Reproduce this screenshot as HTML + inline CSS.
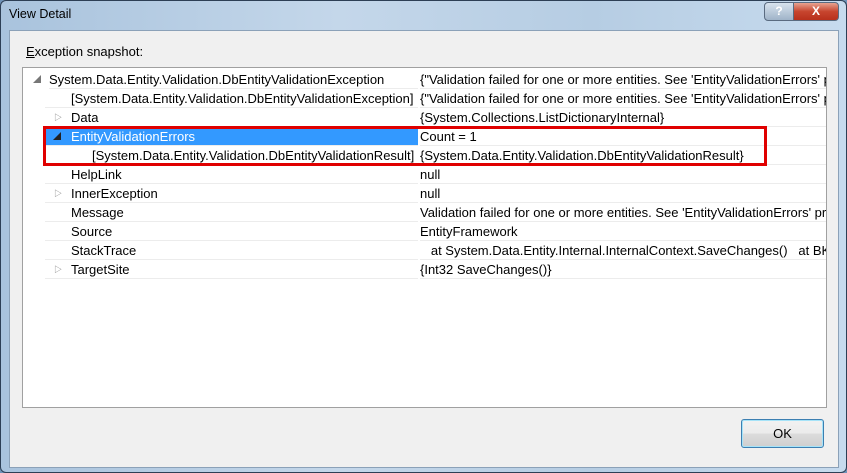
<!DOCTYPE html>
<html><head><style>
body{margin:0;width:847px;height:473px;overflow:hidden;background:#6f93b8;font-family:"Liberation Sans","Noto Sans CJK SC",sans-serif;}
#win{position:absolute;left:0;top:0;width:845px;height:471px;border:1px solid #2d3f55;border-radius:6px;background:linear-gradient(90deg,#a9c3dd,#c4d7ea 40%,#b6cde3 70%,#c7dbee);}
#title{position:absolute;left:8px;top:6px;font-size:12.5px;color:#000;}
#client{position:absolute;left:8px;top:29px;width:828px;height:436px;background:#f0f0f0;border:1px solid #8ba1b8;}
.cap{position:absolute;top:1px;height:17px;border:1px solid #5a6b80;font-size:12px;color:#fff;text-align:center;line-height:17px;font-weight:bold}
#lbl{position:absolute;left:25px;top:43px;font-size:13px;}
#tree{position:absolute;left:21px;top:66px;width:803px;height:339px;background:#fff;border:1px solid #a0a0a0;overflow:hidden;}
.row{position:absolute;left:0;width:803px;height:19px;font-size:13px;line-height:19px;white-space:nowrap;}
.n{position:absolute;left:22px;width:373px;height:18px;border-bottom:1px solid #ececec;}
.v{position:absolute;left:397px;width:410px;height:18px;border-bottom:1px solid #ececec;overflow:hidden;}
.ic{position:absolute;font-size:8px;color:#777;top:0}
#red{position:absolute;left:42px;top:125px;width:718px;height:34px;border:3px solid #e00000;}
#ok{position:absolute;left:740px;top:418px;width:81px;height:27px;border:1px solid #3c7fb1;border-radius:3px;background:linear-gradient(#f2f2f2,#ebebeb 50%,#dcdcdc 51%,#cfcfcf);box-shadow:inset 0 0 0 1px #a6e3f8;font-size:13px;text-align:center;line-height:27px;}
</style></head><body>
<div id="win">
<div id="title">View Detail</div>
<div class="cap" style="left:763px;width:28px;background:linear-gradient(#d8e3ee,#9fb3c8);border-radius:4px 0 0 4px;">?</div>
<div class="cap" style="left:792px;width:44px;background:linear-gradient(#e8a290,#c7452e 50%,#b8301c);border-radius:0 4px 4px 0;">X</div>
<div id="client"></div>
<div id="lbl"><u>E</u>xception snapshot:</div>
<div id="tree">
<div class="row" style="top:2px"><span class="ic" style="left:10px">◢</span><div class="n" style="left:26px;width:369px">System.Data.Entity.Validation.DbEntityValidationException</div><div class="v">{"Validation failed for one or more entities. See 'EntityValidationErrors' property for more details."}</div></div>
<div class="row" style="top:21px"><div class="n"><span style="margin-left:26px">[System.Data.Entity.Validation.DbEntityValidationException]</span></div><div class="v">{"Validation failed for one or more entities. See 'EntityValidationErrors' property for more details."}</div></div>
<div class="row" style="top:40px"><span class="ic" style="left:31px">▷</span><div class="n"><span style="margin-left:26px">Data</span></div><div class="v">{System.Collections.ListDictionaryInternal}</div></div>
<div class="row" style="top:59px"><div class="n" style="background:#3399ff;color:#fff"><span style="margin-left:26px">EntityValidationErrors</span></div><span class="ic" style="left:30px;color:#222">◢</span><div class="v">Count = 1</div></div>
<div class="row" style="top:78px"><div class="n"><span style="margin-left:47px">[System.Data.Entity.Validation.DbEntityValidationResult]</span></div><div class="v">{System.Data.Entity.Validation.DbEntityValidationResult}</div></div>
<div class="row" style="top:97px"><div class="n"><span style="margin-left:26px">HelpLink</span></div><div class="v">null</div></div>
<div class="row" style="top:116px"><span class="ic" style="left:31px">▷</span><div class="n"><span style="margin-left:26px">InnerException</span></div><div class="v">null</div></div>
<div class="row" style="top:135px"><div class="n"><span style="margin-left:26px">Message</span></div><div class="v">Validation failed for one or more entities. See 'EntityValidationErrors' property</div></div>
<div class="row" style="top:154px"><div class="n"><span style="margin-left:26px">Source</span></div><div class="v">EntityFramework</div></div>
<div class="row" style="top:173px"><div class="n"><span style="margin-left:26px">StackTrace</span></div><div class="v">&nbsp;&nbsp;&nbsp;at System.Data.Entity.Internal.InternalContext.SaveChanges()&nbsp;&nbsp;&nbsp;at BK.Web</div></div>
<div class="row" style="top:192px"><span class="ic" style="left:31px">▷</span><div class="n"><span style="margin-left:26px">TargetSite</span></div><div class="v">{Int32 SaveChanges()}</div></div>
</div>
<div id="red"></div>
<div id="ok">OK</div>
</div>
</body></html>
